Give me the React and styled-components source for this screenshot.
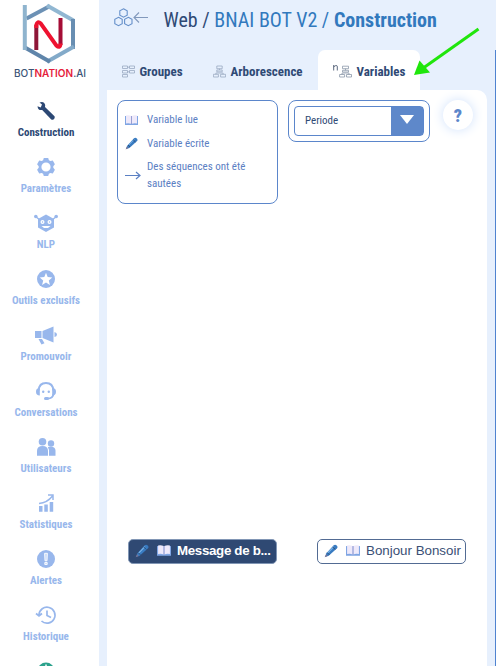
import React from 'react'
import styled, { createGlobalStyle } from 'styled-components'

const GlobalStyle = createGlobalStyle`
  * {
    box-sizing: border-box;
  }
  body {
    margin: 0;
    background: #e7f0fd;
    font-family: 'Roboto Condensed', Roboto, 'Liberation Sans', sans-serif;
    font-stretch: 75%;
    color: #2f4a75;
  }
`

const Page = styled.div`
  display: flex;
  height: 666px;
  overflow: hidden;
  position: relative;
`

const Sidebar = styled.nav`
  width: 99px;
  flex: none;
  background: white;
  padding-top: 3px;
`

const LogoBox = styled.div`
  height: 94px;
`

const NavItem = styled.div`
  display: flex;
  flex-direction: column;
  align-items: center;
  width: 92px;
  height: 56px;
  padding-top: 4px;
  color: ${p => p.$active ? '#2c4874' : '#98b7ec'};
`

const NavIcon = styled.svg`
  width: 24px;
  height: 20px;
  flex: none;
`

const NavLabel = styled.span`
  margin-top: 5px;
  font-size: 11px;
  font-weight: 700;
  line-height: 14px;
  white-space: nowrap;
`

const Main = styled.main`
  flex: 1;
  min-width: 0;
  padding: 0 8px;
  display: flex;
  flex-direction: column;
`

const Edge = styled.div`
  width: 1px;
  margin-top: 50px;
  background: #4f83d0;
`

const Header = styled.header`
  height: 50px;
  flex: none;
  display: flex;
  padding: 8px 0 0 6px;
`

const HeaderIcon = styled.svg`
  width: 36px;
  height: 20px;
  flex: none;
`

const Title = styled.h1`
  margin: 0 0 0 14.5px;
  font-size: 20px;
  font-weight: 400;
  line-height: 24px;
  white-space: nowrap;
  color: #2f4a75;
`

const TitleLink = styled.span`
  color: #3279bd;
`

const Tabs = styled.div`
  display: flex;
  height: 40px;
  flex: none;
`

const Tab = styled.div`
  width: ${p => p.$width}px;
  padding-left: 15px;
  display: flex;
  align-items: center;
  gap: 4.5px;
  border-radius: 7px 7px 0 0;
  background: ${p => p.$active ? 'white' : 'transparent'};
  padding-top: 3px;
  font-size: 13px;
  font-weight: 700;
  white-space: nowrap;
`

const TabIcon = styled.svg`
  height: 13px;
  flex: none;
`

const Panel = styled.section`
  flex: 1;
  background: white;
  border-radius: 0 10px 0 0;
  padding: 10px;
`

const Tools = styled.div`
  display: flex;
  align-items: flex-start;
  height: 439px;
`

const Legend = styled.div`
  width: 161px;
  height: 104px;
  border: 1px solid #5b86cb;
  border-radius: 8px;
  padding: 10px 7px 0;
`

const LegendRow = styled.div`
  display: flex;
  align-items: center;
  margin-bottom: ${p => p.$gap || 0}px;
  font-size: 11px;
  line-height: 17px;
  color: #5b80c3;
`

const LegendIcon = styled.span`
  width: 22px;
  flex: none;
  display: flex;
`

const SelectBox = styled.div`
  width: 142px;
  height: 42px;
  margin-left: 10px;
  padding: 5px;
  border: 1px solid #5b86cb;
  border-radius: 8px;
`

const Select = styled.div`
  display: flex;
  height: 30px;
  border: 1px solid #5b86cb;
  border-radius: 4px;
  font-size: 11px;
  line-height: 28px;
`

const SelectValue = styled.div`
  flex: 1;
  padding-left: 10px;
`

const SelectArrow = styled.div`
  width: 32px;
  background: #5e88ca;
  display: flex;
  justify-content: center;
  padding-top: 8px;
`

const Help = styled.div`
  width: 30px;
  height: 30px;
  margin-left: 13px;
  border-radius: 50%;
  background: white;
  box-shadow: 0 0 12px #cfe1fb;
  color: #5b86cb;
  font-size: 18px;
  font-stretch: 100%;
  font-weight: 900;
  line-height: 31px;
  text-align: center;
`

const Nodes = styled.div`
  display: flex;
  gap: 40px;
  padding-left: 11px;
`

const Node = styled.div`
  display: flex;
  align-items: center;
  width: 149px;
  height: 25px;
  padding: 0 0 2px 6px;
  border: 1px solid ${p => p.$filled ? '#8196b5' : '#526b93'};
  border-radius: 5px;
  background: ${p => p.$filled ? '#2f4973' : 'white'};
  color: ${p => p.$filled ? 'white' : '#3a4f75'};
  font-family: 'Liberation Sans', Arial, sans-serif;
  font-size: 13.333px;
  font-stretch: 100%;
  font-weight: ${p => p.$filled ? 700 : 400};
  letter-spacing: ${p => p.$filled ? '-0.33px' : 'normal'};
  white-space: nowrap;
`

const NodeIcons = styled.span`
  display: flex;
  align-items: center;
  gap: 8px;
  width: 42px;
  flex: none;
`

const Pointer = styled.svg`
  position: absolute;
  left: 410px;
  top: 24px;
`

const Book = ({ size = 13 }) => (
  <svg width={size} height={size * 0.77} viewBox="0 0 13 10">
    <path d="M0 1h13v9H0z" fill="#7fa5e3" />
    <path d="M1 .5Q4 0 6.2 1v7.8Q4 7.8 1 8.4zM6.8 1Q9 0 12 .5v7.9q-3-.6-5.2.4z" fill="#eee9fa" />
    <path d="M6.5 1v8" stroke="#9291c9" strokeWidth=".7" />
  </svg>
)

const Pen = ({ size = 13 }) => (
  <svg width={size} height={size} viewBox="0 0 13 13">
    <path d="M1 12l1.200-3.300L9 1.200q1.500-1 2.800.3t.3 2.500L4.400 11z" fill="#397bc1" />
    <path d="M3.400 8.400l5.800-6" stroke="#7bb5e9" />
    <path d="M8.200 2.800l2.300 2.300M3 8l2 2" stroke="#28466e" strokeWidth=".8" />
    <path d="M.6 12.400l1.300-2.800 1.500 1.500z" fill="#7d7391" />
  </svg>
)

const Logo = () => (
  <svg width="99" height="82" viewBox="0 3 99 82">
    <g fill="none" strokeWidth="4">
      <path d="M26.500 18.500L50 6" stroke="#6c91b5" />
      <path d="M47 5.500L73.500 20.500" stroke="#91b7d2" />
      <path d="M73 19v30" stroke="#688eb2" />
      <path d="M74 46.500L47 61.800" stroke="#83aac9" />
      <path d="M50 61.800L24 47" stroke="#5f85aa" />
      <path d="M24.800 5v45" stroke="#8fb4ce" />
      <path d="M36.300 50V25" stroke="#8e1638" />
      <path d="M60.500 18v27" stroke="#a50d36" />
      <path d="M36.300 28v-3q1-4.500 4.500-1.500l15.500 22q4 3.500 4.200-2" stroke="#ee1230" />
    </g>
    <text x="14" y="77" fontFamily="Inter" fontSize="10" fontWeight="500" textLength="72" lengthAdjust="spacingAndGlyphs" fill="#3c5578">
      BOT<tspan fill="#e51c3b" fontWeight="600">NATION</tspan>.AI
    </text>
  </svg>
)

const navItems = [
  {
    label: 'Construction',
    active: true,
    icon: <path d="M3.500 5.200L6.700 6.500 8 3.500 5.500 1.600Q10-.2 11.200 4L11 6l9.500 9.200q.8 2-1 3.400-1.500.7-2.500-.4L8.200 9Q4 9.800 3.500 5.200z" />,
  },
  {
    label: 'Paramètres',
    icon: <path fillRule="evenodd" d="M9.800 1h4.400l.7 2.300 1.500.8 2.400-.5 2.100 3.700-1.600 1.900v1.600l1.600 1.900-2.100 3.700-2.400-.5-1.500.8-.7 2.300H9.800l-.7-2.300-1.500-.8-2.400.5-2.100-3.700 1.600-1.900V9.200L3.100 7.300l2.100-3.700 2.400.5 1.500-.8zM12 5.400a4.600 4.600 0 100 9.200 4.600 4.600 0 000-9.200z" />,
  },
  {
    label: 'NLP',
    icon: (
      <>
        <circle cx="1.800" cy="3.500" r="1.800" />
        <circle cx="22.200" cy="3.500" r="1.800" />
        <path d="M1.500 3.500L6 7M22.500 3.500L18 7" stroke="currentColor" strokeWidth="1.500" />
        <path d="M4 6L12 1.500 20 6v8.500L12 19l-8-4.500z" />
        <g fill="white"><circle cx="8.500" cy="9" r="2" /><circle cx="15.500" cy="9" r="2" /><path d="M7.500 13h9L14 15h-4z" /></g>
        <circle cx="8.500" cy="9" r=".7" /><circle cx="15.500" cy="9" r=".7" />
      </>
    ),
  },
  {
    label: 'Outils exclusifs',
    icon: <><circle cx="12" cy="10" r="9" /><path fill="white" d="M12 3.800l1.700 4.300 4.600.3-3.500 3 1.100 4.500-3.900-2.500-3.900 2.500 1.100-4.500-3.500-3 4.600-.3z" /></>,
  },
  {
    label: 'Promouvoir',
    icon: <path d="M1 6h6.500v7H1zM8.500 6l11-4.500v16l-11-4.500zM20.500 7q2.500.5 2.500 2.500t-2.500 2.500zM4.500 14H8l2.500 4.200-3 1.300z" />,
  },
  {
    label: 'Conversations',
    icon: (
      <>
        <path d="M4.700 9.500Q5 2 12 2t7.300 7.500M19.500 13q-.5 4.500-6 4.500" fill="none" stroke="currentColor" strokeWidth="2" />
        <path d="M5.800 7v7.500Q2 14.500 2 10.700T5.800 7zM18.200 7v7.500q3.800 0 3.800-3.800T18.200 7z" />
        <circle cx="9.200" cy="10.800" r="1.200" /><circle cx="14.800" cy="10.800" r="1.200" />
        <rect x="10" y="16" width="5" height="3" rx="1.500" />
      </>
    ),
  },
  {
    label: 'Utilisateurs',
    icon: <><circle cx="8.500" cy="4.800" r="3.800" /><path d="M3 18.800v-5Q3 9 8.500 9t5.500 4.800v5z" /><circle cx="17" cy="6.500" r="3.200" /><path d="M15 18.800V13l-1.200-3q7.700-1.500 7.700 3.500v5.300z" /></>,
  },
  {
    label: 'Statistiques',
    icon: <><path d="M5 13h3.500v5.800H5zM10.300 11.500h3.500v7.300h-3.500zM15.700 9h3.500v9.800h-3.500z" /><path d="M5 10.500q8-.5 13.500-7.500M14 2h5v5" fill="none" stroke="currentColor" strokeWidth="1.500" /></>,
  },
  {
    label: 'Alertes',
    icon: <><circle cx="12" cy="10" r="9" /><path d="M10.600 4.300h2.800l-.4 7.500h-2zM10.800 13.500h2.400v2h-2.400z" fill="#c8daf8" stroke="white" strokeWidth=".9" /></>,
  },
  {
    label: 'Historique',
    icon: <path d="M5 10a8 8 0 1 1 2.500 6M2 8.500L5 11l3-2.500M13 5.500v5l4 2" fill="none" stroke="currentColor" strokeWidth="1.700" />,
  },
]

const App = () => {
  return (
    <Page>
      <GlobalStyle />
      <Sidebar>
        <LogoBox><Logo /></LogoBox>
        {navItems.map(item => (
          <NavItem key={item.label} $active={item.active}>
            <NavIcon viewBox="0 0 24 20" fill="currentColor">{item.icon}</NavIcon>
            <NavLabel>{item.label}</NavLabel>
          </NavItem>
        ))}
        <NavItem>
          <NavIcon viewBox="0 0 24 20">
            <circle cx="12" cy="10" r="8.500" fill="#2ba28c" />
            <path d="M12 3.500v3" stroke="white" strokeWidth="1.500" />
          </NavIcon>
        </NavItem>
      </Sidebar>

      <Main>
        <Header>
          <HeaderIcon viewBox="0 0 36 20" fill="none" stroke="#6690ca" strokeWidth="1.100">
            <path d="M10.500.8l3.700 2v4.400l-3.700 2-3.700-2V2.800zM5.500 9.300l3.700 2v4.400l-3.700 2-3.700-2v-4.400zM15.300 9.300l3.700 2v4.400l-3.700 2-3.700-2v-4.400z" />
            <path d="M35 9.500H21.500M26 4.500l-5 5 5 5" stroke="#8299bc" />
          </HeaderIcon>
          <Title>Web / <TitleLink>BNAI BOT V2 / <b>Construction</b></TitleLink></Title>
        </Header>

        <Tabs>
          <Tab $width={91}>
            <TabIcon width="13" viewBox="0 0 13 13" fill="none" stroke="#9aa9c2" strokeWidth=".8">
              <path d="M.5 1h5v2.500h-5zM7.500 1h5v2.500h-5zM.5 5.500h5V8h-5zM.5 9.500h5V12h-5zM7.500 5.500h5V8h-5zM5.500 2.200h2M5.500 6.800h2" />
            </TabIcon>
            Groupes
          </Tab>
          <Tab $width={120}>
            <TabIcon width="13" viewBox="0 0 13 13" fill="none" stroke="#9aa9c2" strokeWidth=".8">
              <path d="M3.800 1h5.400v2.700H3.800zM3.800 5h5.400v1.800H3.800zM.4 9.300h5V12h-5zM7.600 9.300h5V12h-5zM6.500 3.700V5M2.900 9.300V8h7.200v1.300" />
            </TabIcon>
            Arborescence
          </Tab>
          <Tab $active $width={102}>
            <TabIcon width="19" viewBox="0 0 19 13" fill="none" stroke="#8c98aa" strokeWidth=".8">
              <path d="M.7 5.500V0M.7 1.800Q4.300-1 4.300 2v3.500" stroke="#34445e" />
              <path d="M9.500 1.200h6v2.500h-6zM9.500 5.300h6v1.700h-6zM6.600 9.500h5V12h-5zM13.500 9.500h5V12h-5zM12.500 3.700v1.600M9 9.500V8h7v1.500" />
            </TabIcon>
            Variables
          </Tab>
        </Tabs>

        <Panel>
          <Tools>
            <Legend>
              <LegendRow $gap={7}><LegendIcon><Book /></LegendIcon>Variable lue</LegendRow>
              <LegendRow $gap={6}><LegendIcon><Pen /></LegendIcon>Variable écrite</LegendRow>
              <LegendRow>
                <LegendIcon>
                  <svg width="16" height="9" viewBox="0 0 16 9" fill="none" stroke="#5b80c3" strokeWidth="1.200">
                    <path d="M0 4.500h15M11 1l4 3.500L11 8" />
                  </svg>
                </LegendIcon>
                <span>Des séquences ont été<br />sautées</span>
              </LegendRow>
            </Legend>
            <SelectBox>
              <Select>
                <SelectValue>Periode</SelectValue>
                <SelectArrow>
                  <svg width="14" height="9" viewBox="0 0 14 9"><path d="M0 0h14L7 9z" fill="white" /></svg>
                </SelectArrow>
              </Select>
            </SelectBox>
            <Help>?</Help>
          </Tools>
          <Nodes>
            <Node $filled><NodeIcons><Pen size={14} /><Book size={14} /></NodeIcons>Message de b...</Node>
            <Node><NodeIcons><Pen size={14} /><Book size={14} /></NodeIcons>Bonjour Bonsoir</Node>
          </Nodes>
        </Panel>
      </Main>
      <Edge />

      <Pointer width="72" height="56" viewBox="410 24 72 56">
        <path d="M478.500 29L424 67.500" stroke="#20e60c" strokeWidth="3" />
        <path d="M414 75l5.500-14.500L430 72.500z" fill="#20e60c" />
      </Pointer>
    </Page>
  )
}

export default App
